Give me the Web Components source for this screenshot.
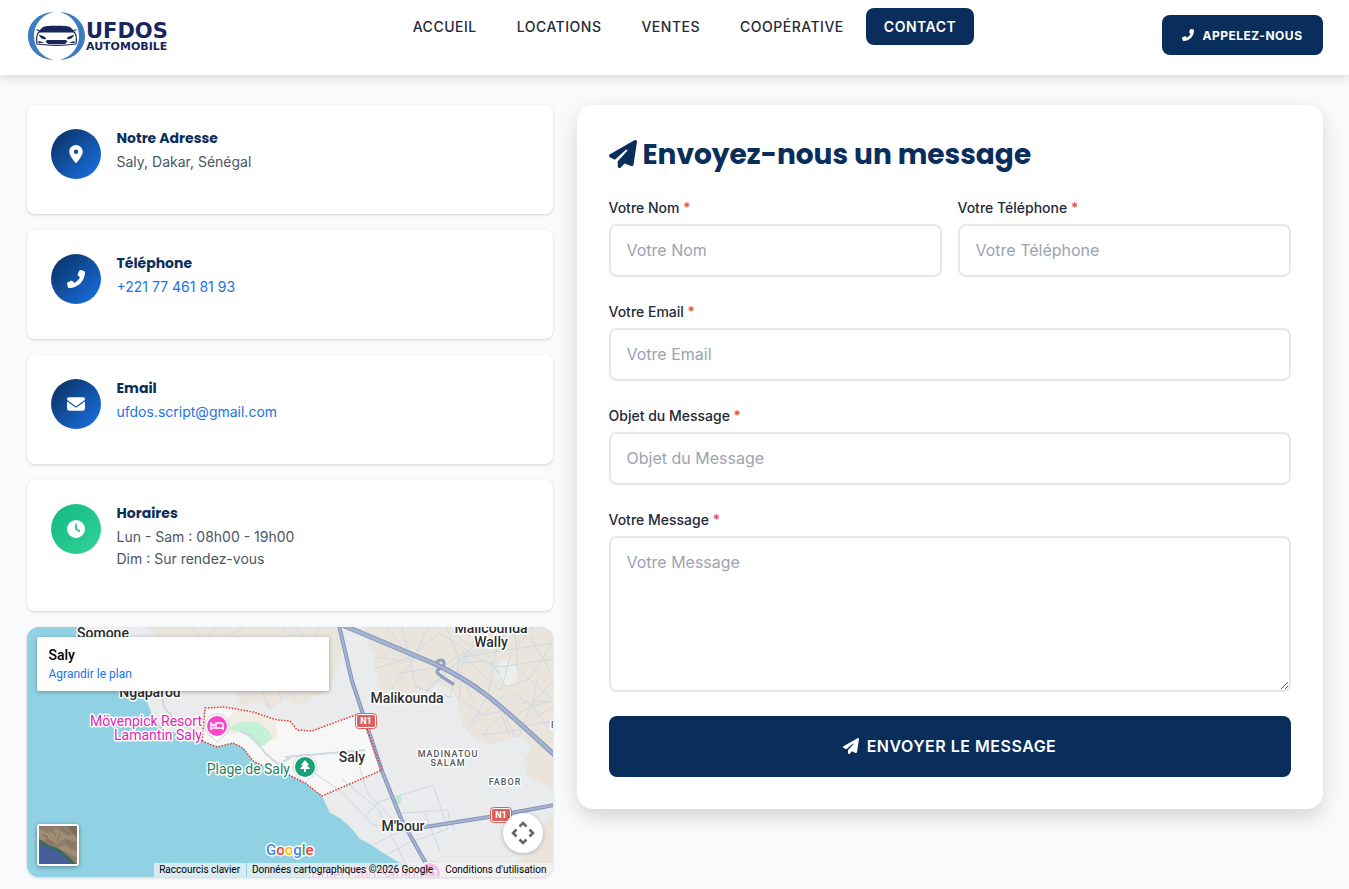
<!DOCTYPE html>
<html lang="fr">
<head>
<meta charset="utf-8">
<meta name="viewport" content="width=device-width, initial-scale=1">
<title>Contact - UFDOS Automobile</title>
<style>
  :root {
    --navy: #0a2e5c;
    --blue: #1a73e8;
    --ink: #1f2937;
    --muted: #4b5563;
    --line: #e5e7eb;
    --head-font: "Poppins", "Inter", sans-serif;
  }
  body { margin: 0; background: #f8fafc; color: var(--ink); font-family: "Inter", sans-serif; font-size: 14px; }
</style>
</head>
<body>
<contact-page></contact-page>
<script>
const define = (name, html, setup) => {
  const tpl = document.createElement('template');
  tpl.innerHTML = '<style>*,*::before,*::after{box-sizing:border-box}</style>' + html;
  customElements.define(name, class extends HTMLElement {
    constructor() {
      super();
      this.attachShadow({ mode: 'open' }).append(tpl.content.cloneNode(true));
    }
    connectedCallback() {
      if (setup && !this.ready) { this.ready = true; setup(this, this.shadowRoot); }
    }
  });
};

const ICONS = {
  pin: ['0 0 384 512', 'M215.7 499.2C267 435 384 279.4 384 192C384 86 298 0 192 0S0 86 0 192c0 87.4 117 243 168.3 307.2c12.3 15.3 35.1 15.3 47.4 0zM192 128a64 64 0 1 1 0 128 64 64 0 1 1 0-128z'],
  phone: ['0 0 512 512', 'M347.1 24.6c7.7-18.6 28-28.5 47.4-23.2l88 24C499.9 30.2 512 46 512 64c0 247.4-200.6 448-448 448c-18 0-33.8-12.1-38.6-29.5l-24-88c-5.3-19.4 4.6-39.7 23.2-47.4l96-40c16.3-6.8 35.2-2.1 46.3 11.6L207.3 368c70.4-33.3 127.4-90.3 160.7-160.7L318.7 167c-13.7-11.2-18.4-30-11.6-46.3l40-96z'],
  mail: ['0 0 512 512', 'M48 64C21.5 64 0 85.5 0 112c0 15.1 7.1 29.3 19.2 38.4L236.8 313.6c11.4 8.5 27 8.5 38.4 0L492.8 150.4c12.1-9.1 19.2-23.3 19.2-38.4c0-26.5-21.5-48-48-48H48zM0 176V384c0 35.3 28.7 64 64 64H448c35.3 0 64-28.7 64-64V176L294.4 339.2c-22.8 17.1-54 17.1-76.8 0L0 176z'],
  clock: ['0 0 512 512', 'M256 0a256 256 0 1 1 0 512A256 256 0 1 1 256 0zM232 120V256c0 8 4 15.5 10.7 20l96 64c11 7.4 25.9 4.4 33.3-6.7s4.4-25.9-6.7-33.3L280 243.2V120c0-13.3-10.7-24-24-24s-24 10.7-24 24z'],
  plane: ['0 0 512 512', 'M498.1 5.6c10.1 7 15.4 19.1 13.5 31.2l-64 416c-1.5 9.7-7.4 18.2-16 23s-18.9 5.4-28 1.6L284 427.7l-68.5 74.1c-8.9 9.7-22.9 12.9-35.2 8.1S160 493.2 160 480V396.4c0-4 1.5-7.8 4.2-10.7L331.8 202.8c5.8-6.3 5.6-16-.4-22s-15.7-6.4-22-.7L106 360.8 17.7 316.6C7.1 311.3 .3 300.7 0 288.9s5.9-22.8 16.1-28.7l448-256c10.7-6.1 23.9-5.5 34 1.4z']
};

define('ui-icon', `
<style>
  :host { display: inline-block; width: 1em; height: 1em; flex: none; vertical-align: -0.125em; }
  svg { display: block; width: 100%; height: 100%; fill: currentColor; }
</style>
<svg aria-hidden="true"><path/></svg>`, (el, root) => {
  const [box, d] = ICONS[el.getAttribute('name')];
  root.querySelector('svg').setAttribute('viewBox', box);
  root.querySelector('path').setAttribute('d', d);
});

define('nav-link', `
<style>
  :host { display: block; }
  a { display: block; padding: 8px 18px; border-radius: 8px; color: var(--ink); text-decoration: none;
      font-size: 14px; font-weight: 500; line-height: 21px; letter-spacing: 0.5px; }
  :host([active]) a { background: var(--navy); color: #fff; font-weight: 600; }
</style>
<a href="#"><slot></slot></a>`, (el, root) => {
  if (el.hasAttribute('active')) root.querySelector('a').setAttribute('aria-current', 'page');
});

define('brand-logo', `
<style>
  :host { display: block; }
  a { display: block; }
  svg { display: block; width: 148px; height: 54px; font-family: "DejaVu Sans", sans-serif; font-weight: 700; }
</style>
<a href="#" aria-label="UFDOS Automobile">
<svg viewBox="27 8 148 54">
  <g fill="#3c7cbf">
    <path d="M53 12C38 13 28 23 28 36s10 23 25 24C42 57 34 48 34 36s8-21 19-24z"/>
    <path d="M60 12c15 1 25 11 25 24s-10 23-25 24c11-3 19-12 19-24s-8-21-19-24z"/>
  </g>
  <path d="M43 27c2-.8 5-1.2 13.5-1.2S68 26.2 70 27c2 1.5 3.5 3.5 4.5 5.5H38.5c1-2 2.5-4 4.5-5.5z" fill="#17265c"/>
  <path d="M40 31l-3-1.2M73 31l3-1.2M39 32c-2.5 2-2.8 6-2 12 12 1.8 27 1.8 39 0 .8-6 .5-10-2-12" fill="none" stroke="#17265c" stroke-width="1.2" stroke-linecap="round"/>
  <path d="M39 34.5l6 2.5c1.5 1 1 2.2 0 2.2-3 0-5.5-1.5-6-4.7zM74 34.5L68 37c-1.5 1-1 2.2 0 2.2 3 0 5.5-1.5 6-4.7zM38.5 41l6 1.5-6 .7zM74.500 41l-6 1.5 6 .7zM47 40h19l1.5 1.5L65 44H48l-2.5-2.5z" fill="#17265c"/>
  <text x="86" y="38" font-size="21" fill="#17265c">UFDOS</text>
  <text x="86" y="50" font-size="11" fill="#17265c">AUTOMOBILE</text>
</svg></a>`);

define('site-header', `
<style>
  :host { display: block; background: #fff; box-shadow: 0 2px 10px rgba(0,0,0,.16); position: relative; z-index: 1; }
  .bar { display: flex; align-items: center; max-width: 1320px; margin: 0 auto; padding: 8px 12px 13px; }
  brand-logo { margin-right: 32px; }
  nav { display: flex; gap: 4px; margin: 0 auto; align-self: flex-start; }
  .call { display: flex; align-items: center; gap: 8px; height: 40px; padding: 0 20px; border-radius: 8px;
    background: var(--navy); color: #fff; font-size: 12px; font-weight: 700; letter-spacing: 0.5px; text-decoration: none; }
</style>
<div class="bar">
  <brand-logo></brand-logo>
  <nav aria-label="Navigation principale">
    <nav-link>ACCUEIL</nav-link><nav-link>LOCATIONS</nav-link><nav-link>VENTES</nav-link><nav-link>COOPÉRATIVE</nav-link><nav-link active>CONTACT</nav-link>
  </nav>
  <a class="call" href="tel:+221774618193"><ui-icon name="phone"></ui-icon>APPELEZ-NOUS</a>
</div>`);

define('info-card', `
<style>
  :host { display: flex; align-items: flex-start; gap: 16px; padding: 24px; border-radius: 8px; background: #fff;
    box-shadow: 0 1px 3px rgba(0,0,0,.16); }
  .disc { display: grid; place-items: center; width: 50px; height: 50px; border-radius: 50%; color: #fff; font-size: 18px;
    background: linear-gradient(135deg, #0a2e5c, #1a73e8); }
  :host([tone="green"]) .disc { background: linear-gradient(135deg, #10b981, #34d399); }
  h3 { margin: 0 0 4px; color: var(--navy); font: 700 14px/18px var(--head-font); }
  .text { margin-bottom: 17px; color: var(--muted); font-size: 14px; line-height: 22px; }
  ::slotted(a) { color: var(--blue); text-decoration: none; }
</style>
<div class="disc"></div>
<div><h3></h3><div class="text"><slot></slot></div></div>`, (el, root) => {
  const icon = document.createElement('ui-icon');
  icon.setAttribute('name', el.getAttribute('icon'));
  root.querySelector('.disc').append(icon);
  root.querySelector('h3').textContent = el.getAttribute('heading');
});

define('form-field', `
<style>
  :host { display: block; }
  label { display: block; margin-bottom: 5px; font-size: 14px; font-weight: 500; line-height: 22px; }
  .req { color: #ef4444; }
  input, textarea { display: block; width: 100%; height: 53px; margin: 0; padding: 12px 16px 13px; border: 2px solid var(--line);
    border-radius: 8px; background: #fff; color: var(--ink); font: 400 16px/24px "Inter", sans-serif; outline: none; }
  textarea { height: 156px; resize: vertical; }
  ::placeholder { color: #9ca3af; opacity: 1; }
</style>
<label for="control"><span class="name"></span> <span class="req">*</span></label>`, (el, root) => {
  const kind = el.getAttribute('kind');
  const control = document.createElement(kind === 'area' ? 'textarea' : 'input');
  if (kind !== 'area') control.type = kind;
  control.id = 'control';
  control.required = true;
  control.placeholder = el.getAttribute('label');
  root.querySelector('.name').textContent = el.getAttribute('label');
  root.append(control);
});

define('contact-form', `
<style>
  :host { display: block; padding: 32px; border-radius: 16px; background: #fff; box-shadow: 0 8px 20px rgba(0,0,0,.15); }
  h2 { margin: 0 0 24px; color: var(--navy); font: 700 28px/36px var(--head-font); }
  form { display: grid; grid-template-columns: 1fr 1fr; gap: 24px 16px; }
  .wide { grid-column: 1 / -1; }
  button { display: flex; align-items: center; justify-content: center; gap: 8px; height: 61px; padding: 18px 16px 19px; border: 0;
    border-radius: 8px; background: var(--navy); color: #fff; font: 600 16px/24px "Inter", sans-serif; letter-spacing: 0.5px; }
</style>
<h2><ui-icon name="plane"></ui-icon> Envoyez-nous un message</h2>
<form>
  <form-field kind="text" label="Votre Nom"></form-field>
  <form-field kind="tel" label="Votre Téléphone"></form-field>
  <form-field class="wide" kind="email" label="Votre Email"></form-field>
  <form-field class="wide" kind="text" label="Objet du Message"></form-field>
  <form-field class="wide" kind="area" label="Votre Message"></form-field>
  <button class="wide" type="submit"><ui-icon name="plane"></ui-icon>ENVOYER LE MESSAGE</button>
</form>`);

define('place-map', `
<style>
  :host { display: block; position: relative; height: 250px; border-radius: 12px; overflow: hidden; background: #e9ebed;
    box-shadow: 0 1px 3px rgba(0,0,0,.16); font-family: "Roboto", sans-serif; }
  .map { display: block; width: 100%; height: 100%; }
  .town { font-size: 14px; font-weight: 500; fill: #2b2d30; text-anchor: middle; }
  .small { font-size: 9px; font-weight: 500; letter-spacing: 1px; fill: #55595e; text-anchor: middle; }
  .poi { font-size: 14px; text-anchor: end; }
  .label { stroke: #fff; stroke-width: 3px; stroke-linejoin: round; paint-order: stroke; }
  .sign { font-size: 9px; font-weight: 700; fill: #fff; text-anchor: middle; }
  .card { position: absolute; left: 10px; top: 10px; width: 292px; height: 54px; padding: 9px 12px; background: #fff;
    border-radius: 2px; box-shadow: 0 1px 4px rgba(0,0,0,.3); }
  .card strong { display: block; font-size: 14px; font-weight: 500; line-height: 18px; color: #000; }
  .card a { display: block; font-size: 12px; line-height: 20px; color: var(--blue); text-decoration: none; }
  .sat { position: absolute; left: 10px; bottom: 11px; width: 42px; height: 42px; padding: 0; border: 2px solid #fff;
    border-radius: 3px; background: none; box-shadow: 0 1px 4px rgba(0,0,0,.4); }
  .sat svg { display: block; width: 38px; height: 38px; }
  .pan { position: absolute; right: 10px; bottom: 24px; width: 40px; height: 40px; padding: 0; border: 0; border-radius: 50%;
    background: #fff; box-shadow: 0 1px 4px rgba(0,0,0,.25); }
  .pan svg { display: block; width: 40px; height: 40px; }
  .legal { position: absolute; right: 0; bottom: 0; display: flex; font-size: 10px; line-height: 14px; }
  .legal > * { margin: 0; padding: 0 6px; border: 0; background: rgba(245,245,245,.7); color: #000; font: inherit; text-decoration: none; }
  .legal button { padding: 0 6px 0 5px; margin-right: 1px; }
  .legal span { padding: 0 6px 0 5px; }
</style>
<svg class="map" viewBox="27 626 526 250" preserveAspectRatio="xMidYMid slice" role="img" aria-label="Carte de Saly">
  <path d="M27 626H553V876H27z" fill="#e9ebed"/>
  <g fill="#e9e4dc">
    <path d="M148 626H338L342 650 330 688 298 704 284 698 270 708 256 700 242 706 236 690 180 660z"/>
    <path d="M365 626L368 645 376 652 373 664 380 680 379 690 392 697 398 705 410 694 436 682 452 690 458 700 462 724 474 736 490 744 508 738 520 734 532 746 524 760 528 776 546 784 553 788V626z"/>
    <path d="M553 812L545 822 541 846 525 856 508 866 520 876H553z"/>
    <path d="M326 802L334 815 350 823 352 829 340 822z"/>
  </g>
  <path d="M498 660l10-2 8 8 1 14-10 6-10-9z" fill="#eceded"/>
  <path d="M205 707L225 706 253 711 277 719 290 720 297 729 312 730 328 724 358 713 367 728 382 769 352 782 322 795 305 782 285 772 263 765 253 760 233 742 217 746 202 740z" fill="#f7f7f7"/>
  <path d="M205 735L240 707 258 710 276 720 277 738 262 742 240 732z" fill="#f2ede4"/>
  <path d="M228 728l12-7 16 0 12 8 5 8-10 8-6-1-14-13-12-2z" fill="#c3f1d5"/>
  <path d="M396 795l4-1 2 4-3 6-3-1z" fill="#bfe8cf"/>
  <g fill="none" stroke="#d0d9e0" stroke-width="2" stroke-linejoin="round">
    <path d="M160 686l4 20 12 14 26 14M240 730l12 5 14 18 12 10 12-6M285 756l80-7"/>
  </g>
  <g fill="none" stroke="#cfd9e1" stroke-width="1">
    <path d="M305 766l36 24 32 34 13 1M356 755l12 38 34 34M342 778l36 30 30 60"/>
    <path d="M366 815l12-14 55-17 15 44-40 14-32 18M402 812l46-3 1 10 6 10M425 812l15 38M374 843l34-16"/>
    <path d="M375 656l30 4 34-28 36 22 34-26M375 668l40-14 28 12 20-14 36 14 54-8M390 690l22-30 16-34M402 626l14 60 34 10 10-36-14-34M425 690l38-34 30-30M463 656l-50 48M463 656l52-28M463 656l-4 44M463 656l38 34 10-38 22-26M463 656l90-14M463 656l20-30M480 640l26 46 24-8 22-36M470 646l-18-16M462 662l24-2 14 12M456 666l18 34M500 628l-12 66-20 34M515 628l3 40 34 30M530 636l20 34M505 712l-24 22 46-6M497 700l12 34M463 700l20 14 20-4 12 26M553 680l-22 24-12 32M532 705l21-5M532 705l-20-14M532 705l16 22M532 705l5-28M532 705l-34 20M474 722l30-28M553 720l-35 6M386 626l28 34M400 672l44-6M548 700l-26 2M536 716l17-10"/>
    <path d="M218 626l-12 10M244 626l-16 10M290 636l-8-10M305 636l-10-10M320 626l-5 10M262 690l8 18M278 690l4 10M200 636l-8-10"/>
  </g>
  <path d="M27 626H78L92 650 130 680 146 690 148 703 153 716 163 728 180 733 202 740 217 746 233 742 243 747 253 760 263 765 285 772 305 782 322 795 330 812 340 817 352 828 360 838 368 842 385 853 400 862 420 866 425 876H27z" fill="#90d2e3"/>
  <g fill="none" stroke-linecap="round" stroke-linejoin="round">
    <g stroke="#8494bb" stroke-width="4"><path d="M338 620L352 680 363 713 382 770 402 820 428 866"/><path d="M400 829L425 826 495 815 560 803"/></g>
    <g stroke="#a6b4d2" stroke-width="2"><path d="M338 620L352 680 363 713 382 770 402 820 428 866"/><path d="M400 829L425 826 495 815 560 803"/></g>
    <path d="M436 664c0-5 8-7 8-2 1 4-7 5-7 9 2 4 9 7 16 12" stroke="#8494bb" stroke-width="3"/>
    <path d="M436 664c0-5 8-7 8-2 1 4-7 5-7 9 2 4 9 7 16 12" stroke="#a6b4d2" stroke-width="1"/>
    <path d="M335 620L347 626 435 663C480 684 500 704 560 759" stroke="#8494bb" stroke-width="5"/>
    <path d="M335 620L347 626 435 663C480 684 500 704 560 759" stroke="#a6b4d2" stroke-width="3"/>
  </g>
  <path d="M202 740L205 707 225 706 253 711 277 719 290 720 297 729 312 730 328 724 358 713 M367 728L382 769 352 782 322 795 305 782 285 772 263 765 253 760 243 747 233 742 217 746 202 740" fill="none" stroke="#e8352e" stroke-width="1.5" stroke-dasharray="1.5 1.5"/>
  <g fill="#d9625f" stroke="#fff" stroke-width="1"><rect x="356.5" y="713.5" width="19" height="13" rx="2"/><rect x="491.5" y="807.5" width="19" height="13" rx="2"/></g>
  <g fill="none" stroke="#d9625f"><rect x="355.5" y="712.5" width="21" height="15" rx="3"/><rect x="490.5" y="806.5" width="21" height="15" rx="3"/></g>
  <text class="sign" x="366" y="723">N1</text><text class="sign" x="501" y="817">N1</text>
  <g class="label">
    <g class="town">
      <text x="103" y="637">Somone</text><text x="150" y="696">Ngaparou</text><text x="407" y="702">Malikounda</text>
      <text x="491" y="632">Malicounda</text><text x="491" y="646">Wally</text><text x="352" y="761">Saly</text><text x="403" y="830">M'bour</text>
    </g>
    <g class="small"><text x="448" y="756">MADINATOU</text><text x="448" y="765">SALAM</text><text x="505" y="784">FABOR</text><text x="554" y="727">F</text></g>
    <g class="poi"><g fill="#e31fb2"><text x="202" y="725">Mövenpick Resort</text><text x="202" y="739">Lamantin Saly</text><text x="416" y="878">Hôtel Club Safari</text></g>
      <text x="290" y="773" fill="#1d8161">Plage de Saly</text></g>
  </g>
  <g stroke="#8a8a8a" stroke-opacity=".35" fill="#fff">
    <path d="M217 741c-3-5-12-7-12-16a12 12 0 0 1 24 0c0 9-9 11-12 16z"/>
    <path d="M305 782c-3-5-12-7-12-16a12 12 0 0 1 24 0c0 9-9 11-12 16z"/>
    <circle cx="430" cy="872" r="12"/>
  </g>
  <circle cx="217" cy="725" r="10" fill="#f748c6"/><circle cx="305" cy="766" r="10" fill="#18a276"/><circle cx="430" cy="872" r="10" fill="#f748c6"/>
  <path d="M211 721v8M211 727h12v2M223 729v-5q0-2-2-2h-5v5" fill="none" stroke="#fff" stroke-width="1.5"/><circle cx="213.5" cy="724" r="1.5" fill="#fff"/>
  <path d="M424 868v8h12v-6h-7v4" fill="none" stroke="#fff" stroke-width="1.5"/>
  <path d="M305 759l4 5h-2l3 4h-4v3h-2v-3h-4l3-4h-2z" fill="#fff"/>
  <text class="label" x="266" y="854" font-size="15" font-weight="500"><tspan fill="#4285f4">G</tspan><tspan fill="#ea4335">o</tspan><tspan fill="#fbbc05">o</tspan><tspan fill="#4285f4">g</tspan><tspan fill="#34a853">l</tspan><tspan fill="#ea4335">e</tspan></text>
</svg>
<div class="card"><strong>Saly</strong><a href="#">Agrandir le plan</a></div>
<button class="sat" type="button" aria-label="Vue satellite"><svg viewBox="0 0 38 38">
  <path d="M0 0h38v38H0z" fill="#8d7c69"/>
  <path d="M0 2l9 5 8-5 12 8 9-3v9l-12-3-9 5-8-6-9 4zM18 22l9-3 11 7v6l-9-5z" fill="#a08b73"/>
  <path d="M3 9l6 2M12 4l5 6M21 8l-3 7M28 14l5 9M24 3l5 5M8 15l7 3" stroke="#7b6c5d" stroke-width="1"/>
  <path d="M28 0h10v12z" fill="#7a6d60"/>
  <path d="M0 13l10 6 10 4 8 6 9 9H0z" fill="#386a60"/>
  <path d="M0 17l9 5 10 4 8 6 5 6H0z" fill="#475e9b"/>
</svg></button>
<button class="pan" type="button" aria-label="Commandes de la caméra"><svg viewBox="0 0 40 40" fill="none" stroke="#666" stroke-width="2.5"><path d="M16.5 13.5l3.5-3.5 3.5 3.5M16.5 26.5l3.5 3.5 3.5-3.5M13.5 16.5l-3.5 3.5 3.5 3.5M26.5 16.5l3.5 3.5-3.5 3.5"/></svg></button>
<div class="legal"><button type="button">Raccourcis clavier</button><span>Données cartographiques ©2026 Google</span><a href="#">Conditions d'utilisation</a></div>`);

define('contact-page', `
<style>
  :host { display: block; }
  main { display: grid; grid-template-columns: minmax(0, 526fr) minmax(0, 746fr); gap: 24px; align-items: start;
    max-width: 1320px; margin: 0 auto; padding: 30px 12px 12px; }
  .info { display: grid; gap: 16px; }
</style>
<site-header></site-header>
<main>
  <div class="info">
    <info-card icon="pin" heading="Notre Adresse">Saly, Dakar, Sénégal</info-card>
    <info-card icon="phone" heading="Téléphone"><a href="tel:+221774618193">+221 77 461 81 93</a></info-card>
    <info-card icon="mail" heading="Email"><a href="mailto:ufdos.script@gmail.com">ufdos.script@gmail.com</a></info-card>
    <info-card icon="clock" heading="Horaires" tone="green">Lun - Sam : 08h00 - 19h00<br>Dim : Sur rendez-vous</info-card>
    <place-map></place-map>
  </div>
  <contact-form></contact-form>
</main>`);
</script>
</body>
</html>
